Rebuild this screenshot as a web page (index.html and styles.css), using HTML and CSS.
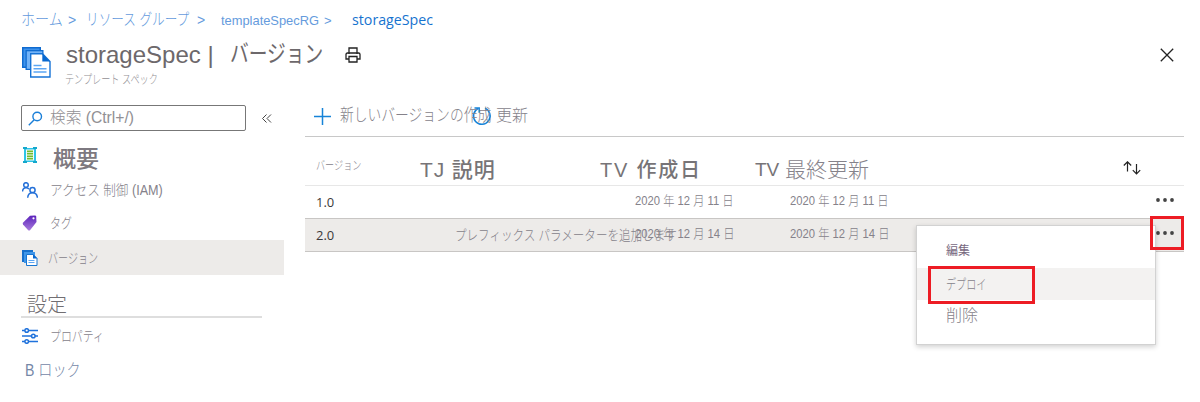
FILE: index.html
```html
<!DOCTYPE html>
<html lang="ja">
<head>
<meta charset="utf-8">
<title>storageSpec | バージョン</title>
<link rel="stylesheet" href="styles.css">
</head>
<body>
<nav class="breadcrumb">
  <a class="t bc-home">ホーム</a><span class="t bc-sep1">&gt;</span>
  <a class="t bc-groups">リソース グループ</a><span class="t bc-sep2">&gt;</span>
  <a class="t bc-rg">templateSpecRG</a><span class="t bc-sep3">&gt;</span>
  <a class="t bc-current">storageSpec</a>
</nav>
<header class="header">
  <svg class="header-icon" viewBox="0 0 30 32"><path fill="#0f6bd0" d="M0 0h19v21H0z"/><path fill="#3f93ec" d="M1.500 1.500h16v18h-16z"/><path fill="#0f6bd0" d="M3.500 3h18v20h-18z"/><path fill="#73b3f7" d="M4.800 4.300h15.500v17.500H4.800z"/><path fill="#fff" stroke="#1673d6" stroke-width="1.400" d="M8.700 6.700h11.800l7.500 7.800v15.500H8.700z"/><path fill="#0868cf" d="M20.300 6.500v8H28z"/><path stroke="#5ca6f3" stroke-width="1.600" d="M11.500 18.500h8M11.500 21.800h13M11.500 25h13"/></svg>
  <div class="headings">
    <h1 class="title"><span class="t title-name">storageSpec |</span><span class="t title-page">バージョン</span>
      <svg class="print" viewBox="0 0 16 16" fill="none" stroke="#222" stroke-width="1.300"><path d="M4 7V1h8v6M4 12H1V7.500Q1 6 2.500 6h11Q15 6 15 7.500V12h-3M4 9.500h8V15H4z"/></svg>
    </h1>
    <div class="t subtitle">テンプレート スペック</div>
  </div>
  <svg class="close" viewBox="0 0 14 14" stroke="#222" stroke-width="1.300"><path d="M.8.800l12.400 12.400M13.200.800L.8 13.200"/></svg>
</header>
<div class="body">
  <aside class="side">
    <div class="search-row">
      <div class="search"><svg class="search-icon" viewBox="0 0 15 15" fill="none" stroke="#1a7fd8" stroke-width="1.400"><circle cx="9.200" cy="5.500" r="4.300"/><path d="M6.200 8.700L.8 14.200"/></svg><span class="t search-text">検索 (Ctrl+/)</span></div>
      <svg class="collapse" viewBox="0 0 10 9" fill="none" stroke="#444" stroke-width="1"><path d="M4.500.5l-4 4 4 4M9 .5l-4 4 4 4"/></svg>
    </div>
    <a class="item overview"><svg class="icon" viewBox="0 0 16 16"><path fill="#2ec4e6" d="M2 1h12v14H2z"/><path fill="#eefbfd" d="M4 2.500h8v11H4z"/><path fill="#14a8cc" d="M1 0h4v2H1zM11 0h4v2h-4zM1 14h4v2H1zM11 14h4v2h-4z"/><path fill="#76bc2d" d="M5 3.500h6v1.800H5zM5 6h6v1.600H5zM5 8.400h6V10H5zM5 10.800h6v1.700H5z"/></svg><span class="t overview-text">概要</span></a>
    <a class="item iam"><svg class="icon" viewBox="0 0 16 16" fill="none" stroke="#2470d8" stroke-width="1.500"><circle cx="4" cy="3" r="2.300"/><path d="M.5 9.500Q.8 5.700 4 5.700q2 0 3 1.500"/><circle cx="10.500" cy="8" r="2.600"/><path d="M5.700 15.800q.3-5 4.800-5t4.900 5"/></svg><span class="t iam-text">アクセス 制御 (IAM)</span></a>
    <a class="item tags"><svg class="icon" viewBox="0 0 16 16"><defs><linearGradient id="tag" x1="0" y1="0" x2="0" y2="1"><stop stop-color="#5b22bb"/><stop offset="1" stop-color="#a77bdc"/></linearGradient></defs><path fill="url(#tag)" d="M8 .8L13 .5q1 0 1.200 1l.3 5.500L8 15.200Q7 16 6 15L1 9.500q-.7-1 .2-2z"/><circle cx="11.500" cy="3.300" r="1.100" fill="#fff"/></svg><span class="t tags-text">タグ</span></a>
    <a class="item selected"><svg class="icon" viewBox="0 0 16 16"><path fill="#1770cc" d="M0 0h11v12H0z"/><path fill="#4097e9" d="M2 2h11v11H2z"/><path fill="#fff" stroke="#1976d2" d="M4.500 4.500H11l4 4v7H4.500z"/><path fill="#0868cf" d="M11 4v4.500h4.500z"/><path stroke="#5ca6f3" d="M6.500 10.500h6M6.500 12.500h6"/></svg><span class="t versions-text">バージョン</span></a>
    <h2 class="section"><span class="t section-text">設定</span></h2>
    <a class="item props"><svg class="icon" viewBox="0 0 16 16" fill="#fff" stroke="#1f72dc" stroke-width="1.500"><path d="M0 2.500h16M0 8h16M0 13.500h16"/><circle cx="4.700" cy="2.500" r="1.800"/><circle cx="11.300" cy="8" r="1.800"/><circle cx="4.700" cy="13.500" r="1.800"/></svg><span class="t props-text">プロパティ</span></a>
    <a class="item locks"><span class="t locks-text">B ロック</span></a>
  </aside>
  <main class="main">
    <div class="toolbar">
      <svg class="plus" viewBox="0 0 17 17" stroke="#1683d8" stroke-width="1.500"><path d="M8.500 0v17M0 8.500h17"/></svg>
      <span class="t create-text">新しいバージョンの作成</span>
      <svg class="refresh" viewBox="0 0 20 20" fill="none" stroke="#1683d8" stroke-width="1.500"><path d="M13 2.300a8.300 8.300 0 1 1-7 .3M2.500 2h4.700v4.700"/></svg>
      <span class="t refresh-text">更新</span>
    </div>
    <div class="row head">
      <span class="t h-version">バージョン</span><span class="t h-desc">TJ 説明</span><span class="t h-created">TV 作成日</span><span class="h-updated"><span class="t tv">TV</span><span class="t updated">最終更新</span></span>
      <svg class="sort" viewBox="0 0 18 14" fill="none" stroke="#222" stroke-width="1.200"><path d="M4.500 10.500V1M.8 4.500L4.500.8l3.700 3.700M13.500 3v9.800M9.800 9.200l3.700 3.700 3.700-3.700"/></svg>
    </div>
    <div class="row first">
      <span class="version">1.0</span><span></span><span class="t date">2020 年 12 月 11 日</span><span class="t date">2020 年 12 月 11 日</span>
      <svg class="dots" viewBox="0 0 18 4" fill="#444"><circle cx="2" cy="2" r="1.900"/><circle cx="9" cy="2" r="1.900"/><circle cx="16" cy="2" r="1.900"/></svg>
    </div>
    <div class="row second">
      <span class="version">2.0</span><span class="t desc">プレフィックス パラメーターを追加します</span><span class="t date">2020 年 12 月 14 日</span><span class="t date">2020 年 12 月 14 日</span>
      <svg class="dots" viewBox="0 0 18 4" fill="#444"><circle cx="2" cy="2" r="1.900"/><circle cx="9" cy="2" r="1.900"/><circle cx="16" cy="2" r="1.900"/></svg>
    </div>
    <div class="menu">
      <div class="menu-item edit"><span class="t edit-text">編集</span></div>
      <div class="menu-item deploy"><span class="t deploy-text">デプロイ</span></div>
      <div class="menu-item delete"><span class="t delete-text">削除</span></div>
      <div class="mark mark-deploy"></div>
    </div>
    <div class="mark mark-more"></div>
  </main>
</div>
</body>
</html>
```
FILE: styles.css
```css
* { box-sizing: border-box; }
body { margin: 0; width: 1200px; height: 402px; overflow: hidden; background: #fff; color: #85828a; font-family: "Liberation Sans", "Noto Sans CJK JP", sans-serif; font-weight: 300; }
h1, h2 { margin: 0; font-weight: 300; }
svg { display: block; flex: none; }
.t { display: block; flex: none; white-space: nowrap; line-height: 20px; transform-origin: 0 50%; }

.breadcrumb { display: flex; align-items: center; height: 38px; padding-left: 21px; color: #659bdd; font-size: 12px; }
.bc-home { width: 47px; padding-top: 2px; font-size: 16px; transform: scaleX(.88); }
.bc-sep1 { width: 18px; padding-top: 2px; font-size: 14px; }
.bc-groups { width: 111px; padding-top: 2px; font-size: 16px; transform: scaleX(.79); }
.bc-sep2 { width: 24px; padding-top: 2px; font-size: 14px; }
.bc-rg { width: 103px; padding-top: 3px; font-size: 13px; transform: scaleX(.99); }
.bc-sep3 { width: 28px; padding-top: 3px; font-size: 13px; }
.bc-current { color: #1673cf; padding-top: 2px; font: 400 14.5px/20px "Open Sans", sans-serif; transform: scaleX(.98); }

.header { display: flex; height: 62px; padding-left: 22px; }
.header-icon { width: 30px; height: 32px; margin-top: 9px; }
.headings { width: 300px; margin-left: 14px; }
.title { display: flex; align-items: center; height: 32px; color: #6d686b; font-size: 24px; font-weight: 400; }
.title-name { width: 164px; padding-top: 2px; }
.title-page { width: 115px; transform: scaleX(.78); }
.print { width: 16px; height: 16px; margin-top: 2px; }
.subtitle { margin: 0 0 0 -1px; font-size: 12px; color: #929094; transform: scaleX(.76); }
.close { width: 14px; height: 14px; margin: 10px 0 0 794px; }

.body { display: flex; }
.side { width: 284px; height: 302px; flex: none; }
.search-row { display: flex; align-items: center; height: 36px; padding-left: 21px; }
.search { display: flex; align-items: center; width: 225px; height: 26px; padding-left: 6px; border: 1px solid #777; border-radius: 2px; }
.search-icon { width: 15px; height: 15px; margin-right: 7px; }
.search-text { font-size: 16px; color: #929094; transform: scaleX(.98); }
.collapse { width: 10px; height: 9px; margin-left: 16px; }
.item { display: flex; align-items: center; padding-left: 22px; }
.icon { width: 16px; height: 16px; margin-right: 12px; }
.overview { height: 38px; padding-top: 7px; }
.overview .icon { margin: -8px 15px 0 0; }
.overview-text { font-size: 23px; font-weight: 500; color: #7d7980; }
.iam { height: 31px; }
.iam-text { font-size: 14px; transform: scaleX(.9); }
.tags { height: 35px; }
.tags-text { font-size: 14px; transform: scaleX(.78); }
.selected { height: 35px; background: #edebe9; }
.versions-text { margin-left: -2px; font-size: 14px; transform: scaleX(.72); }
.section { display: flex; align-items: flex-end; width: 241px; height: 43px; margin-left: 21px; padding: 0 0 1px 6px; border-bottom: 2px solid #dedede; }
.section-text { font-size: 20px; color: #716e72; }
.props { height: 35px; }
.props-text { font-size: 14px; transform: scaleX(.78); }
.locks { height: 36px; padding-left: 25px; }
.locks-text { font-size: 17px; color: #7587a7; transform: scaleX(.83); }

.main { position: relative; width: 879px; margin-left: 21px; }
.toolbar { display: flex; align-items: center; height: 37px; padding: 0 0 5px 9px; border-bottom: 1px solid #c8c8c8; }
.plus { width: 17px; height: 17px; margin: 2px 9px 0 0; }
.create-text { width: 132px; font-size: 17px; transform: scaleX(.81); }
.refresh { width: 20px; height: 20px; margin-right: 4px; }
.refresh-text { font-size: 16px; }
.row { display: grid; grid-template-columns: 104px 180px 155px 155px 1fr; align-items: center; padding-left: 11px; }
.head { height: 49px; padding-top: 17px; border-bottom: 1px solid #e7e7e7; }
.h-version { margin-top: -8px; font-size: 12px; transform: scaleX(.76); }
.h-desc, .h-created { font-size: 21px; font-weight: 500; color: #777477; }
.h-desc { letter-spacing: .9px; }
.h-created { font-size: 20px; letter-spacing: 1.8px; }
.h-updated { display: flex; }
.tv { width: 30px; font-size: 19px; font-weight: 500; color: #777477; }
.updated { font-size: 21px; }
.sort { width: 18px; height: 14px; margin: -4px 0 0 213px; }
.first, .second { height: 33px; border-bottom: 1px solid #c8c6c4; }
.second { background: #edebe9; }
.version { color: #3b393a; font: 400 13px/20px "Open Sans", sans-serif; }
.date { margin: -2px 0 0 35px; font-size: 13px; transform: scaleX(.865); }
.desc { margin-left: 35px; font-size: 14px; transform: scaleX(.825); }
.dots { width: 18px; height: 4px; margin: -4px 0 0 246px; }
.menu { position: absolute; left: 611px; top: 125px; width: 240px; height: 120px; padding-top: 8px; border: 1px solid #d2d2d2; background: #fff; box-shadow: 0 2px 5px rgba(0,0,0,.18); }
.menu-item { display: flex; align-items: center; height: 32px; padding-left: 29px; }
.edit { height: 34px; }
.edit-text { font-size: 12px; font-weight: 400; color: #77687e; }
.deploy { background: #f3f2f1; }
.deploy-text { font-size: 14px; transform: scaleX(.72); }
.delete-text { font-size: 16px; }
.mark { position: absolute; border: 3px solid #ed1c24; }
.mark-deploy { left: 11px; top: 40px; width: 107px; height: 38px; }
.mark-more { left: 845px; top: 116px; width: 34px; height: 34px; }
```
